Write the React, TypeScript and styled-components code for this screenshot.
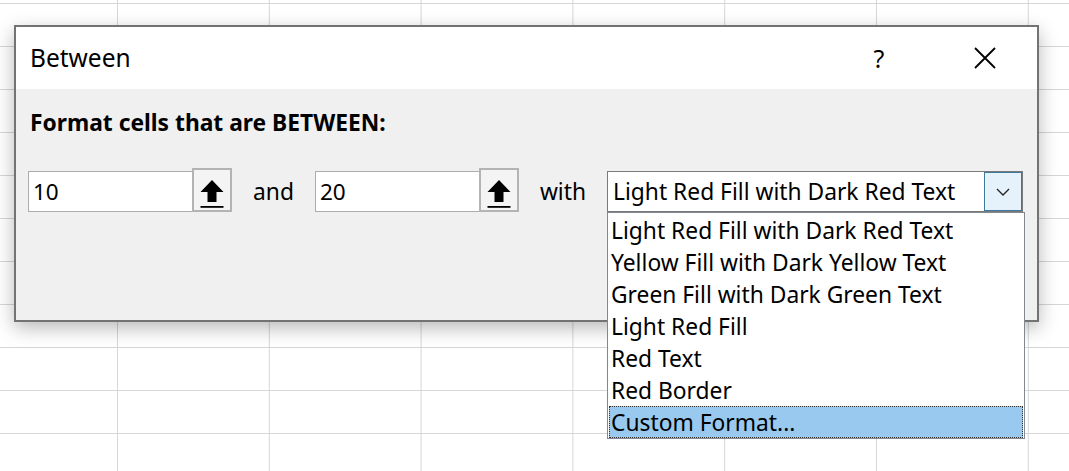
import React from "react";
import styled, { createGlobalStyle } from "styled-components";

const GlobalStyle = createGlobalStyle`
  html, body {
    margin: 0;
    padding: 0;
  }
  body {
    font-family: "Noto Sans", "Open Sans", sans-serif;
    color: #000;
    background: #fff;
  }
`;

const Sheet = styled.div`
  width: 1069px;
  height: 471px;
  overflow: hidden;
  box-sizing: border-box;
  padding: 25px 0 0 14px;
  background-color: #fff;
  background-image:
    linear-gradient(to right, #d6d6d6 1px, transparent 1px),
    linear-gradient(to bottom, #d6d6d6 1px, transparent 1px);
  background-size: 151.8px 43px;
  background-position: 117px 3px;
`;

const Dialog = styled.div`
  width: 1025px;
  height: 297px;
  box-sizing: border-box;
  border: 2px solid #737373;
  background: #f0f0f0;
  box-shadow: 0 6px 18px rgba(0, 0, 0, 0.28);
  display: flex;
  flex-direction: column;
`;

const TitleBar = styled.div`
  height: 62px;
  flex: none;
  background: #fff;
  display: flex;
  align-items: center;
  padding: 0 0 0 14px;
`;

const Title = styled.div`
  flex: 1;
  font-size: 24.5px;
  padding-bottom: 2px;
`;

const TitleButton = styled.div<{ $w: number }>`
  width: ${(p) => p.$w}px;
  height: 40px;
  display: flex;
  align-items: center;
  justify-content: center;
  font-size: 25px;
`;

const Body = styled.div`
  flex: 1;
  padding: 19px 12px 0 12px;
`;

const Heading = styled.div`
  font-weight: 700;
  font-size: 22.8px;
  line-height: 30px;
  padding-left: 2px;
  margin-bottom: 33px;
`;

const Row = styled.div`
  display: flex;
  align-items: center;
  height: 41px;
`;

const RefField = styled.div`
  width: 204px;
  height: 41px;
  display: flex;
  box-sizing: border-box;
`;

const RefInput = styled.div`
  flex: 1;
  background: #fff;
  border: 1px solid #adadad;
  border-right: none;
  display: flex;
  align-items: center;
  padding-left: 4px;
  font-size: 22.5px;
`;

const RefButton = styled.div`
  width: 40px;
  box-sizing: border-box;
  border: 2px solid #b4b4b4;
  margin-top: -3px;
  height: 44px;
  background: #f4f4f4;
  display: flex;
  align-items: center;
  justify-content: center;
`;

const Label = styled.div<{ $w: number }>`
  width: ${(p) => p.$w}px;
  text-align: center;
  font-size: 22.8px;
`;

const Select = styled.div`
  position: relative;
  width: 416px;
  height: 41px;
  box-sizing: border-box;
  border: 1px solid #7a7a7a;
  background: #fff;
  display: flex;
  align-items: center;
`;

const SelectValue = styled.div`
  flex: 1;
  padding-left: 5px;
  font-size: 22.8px;
  white-space: nowrap;
  overflow: hidden;
`;

const DropButton = styled.div`
  width: 38px;
  height: 39px;
  flex: none;
  box-sizing: border-box;
  border: 1px solid #3e7a9d;
  background: #e5f1fb;
  display: flex;
  align-items: center;
  justify-content: center;
`;

const ListBox = styled.div`
  position: absolute;
  left: -1px;
  top: 40px;
  width: 418px;
  box-sizing: border-box;
  border: 1px solid #828790;
  background: #fff;
  padding: 1px 1px 0 1px;
`;

const Option = styled.div<{ $selected?: boolean }>`
  height: 32px;
  box-sizing: border-box;
  display: flex;
  align-items: center;
  padding-left: 2px;
  font-size: 22.8px;
  white-space: nowrap;
  background: ${(p) => (p.$selected ? "#99c9ef" : "transparent")};
  outline: ${(p) => (p.$selected ? "1px dotted #333" : "none")};
  outline-offset: -1px;
`;

const ArrowIcon = () => (
  <svg width="26" height="36" viewBox="0 0 26 36">
    <path d="M13 8 L1.5 20 L8.5 20 L8.5 30 L17.5 30 L17.5 20 L24.5 20 Z" fill="#000" />
    <rect x="1.5" y="34" width="23" height="1.8" fill="#000" />
  </svg>
);

const CloseIcon = () => (
  <svg width="22" height="22" viewBox="0 0 22 22">
    <path d="M1 1 L21 21 M21 1 L1 21" stroke="#000" strokeWidth="1.8" fill="none" />
  </svg>
);

const Chevron = () => (
  <svg width="14" height="8" viewBox="0 0 14 8">
    <path d="M1 1 L7 7 L13 1" stroke="#222" strokeWidth="1.3" fill="none" />
  </svg>
);

const options = [
  "Light Red Fill with Dark Red Text",
  "Yellow Fill with Dark Yellow Text",
  "Green Fill with Dark Green Text",
  "Light Red Fill",
  "Red Text",
  "Red Border",
  "Custom Format...",
];

export default function App() {
  return (
    <>
      <GlobalStyle />
      <Sheet>
        <Dialog>
          <TitleBar>
            <Title>Between</Title>
            <TitleButton $w={156}>?</TitleButton>
            <TitleButton $w={56}>
              <CloseIcon />
            </TitleButton>
            <TitleButton $w={24} />
          </TitleBar>
          <Body>
            <Heading>Format cells that are BETWEEN:</Heading>
            <Row>
              <RefField>
                <RefInput>10</RefInput>
                <RefButton>
                  <ArrowIcon />
                </RefButton>
              </RefField>
              <Label $w={83}>and</Label>
              <RefField>
                <RefInput>20</RefInput>
                <RefButton>
                  <ArrowIcon />
                </RefButton>
              </RefField>
              <Label $w={88}>with</Label>
              <Select>
                <SelectValue>{options[0]}</SelectValue>
                <DropButton>
                  <Chevron />
                </DropButton>
                <ListBox>
                  {options.map((o, i) => (
                    <Option key={o} $selected={i === options.length - 1}>
                      {o}
                    </Option>
                  ))}
                </ListBox>
              </Select>
            </Row>
          </Body>
        </Dialog>
      </Sheet>
    </>
  );
}
